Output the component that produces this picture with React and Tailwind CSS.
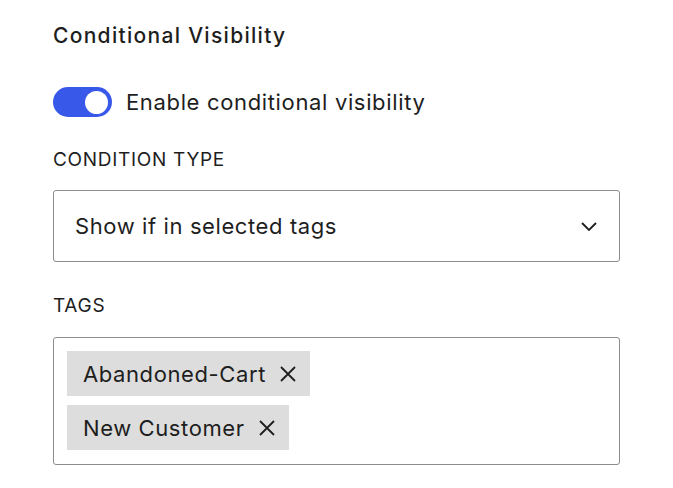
const Chip = ({ label }) => (
  <div className="flex items-center h-[45px] bg-[#dddddd] pl-[16px] pr-[13px] gap-[13px]">
    <span className="text-[22px] tracking-[0.6px] text-[#1e1e1e] leading-[28px]">{label}</span>
    <svg width="18" height="16" viewBox="0 0 18 16" fill="none" stroke="#1e1e1e" strokeWidth="1.8">
      <path d="M2 1 L16 15 M16 1 L2 15" />
    </svg>
  </div>
);

const App = () => {
  return (
    <div
      className="w-[673px] h-[488px] bg-white text-[#1e1e1e] pl-[53px] pr-[53px] pt-[22px]"
      style={{ fontFamily: "Inter, 'Noto Sans', sans-serif" }}
    >
      <h2 className="text-[21px] tracking-[1.3px] font-medium leading-[28px]">Conditional Visibility</h2>

      <div className="flex items-center mt-[37px] gap-[14px]">
        <div className="relative w-[59px] h-[30px] rounded-full bg-[#3858e9]">
          <div className="absolute right-[4px] top-[3.5px] w-[23px] h-[23px] rounded-full bg-white" />
        </div>
        <span className="text-[22px] tracking-[0.65px] leading-[28px]">Enable conditional visibility</span>
      </div>

      <p className="mt-[31px] text-[19px] tracking-[0.7px] uppercase leading-[24px]">Condition Type</p>

      <div className="mt-[18px] w-[567px] h-[72px] border border-[#8c8c8c] rounded-[3px] flex items-center justify-between pl-[21px] pr-[22px]">
        <span className="text-[22px] tracking-[0.6px]">Show if in selected tags</span>
        <svg width="16" height="9" viewBox="0 0 16 9" fill="none" stroke="#1e1e1e" strokeWidth="1.8">
          <path d="M1 1 L8 8 L15 1" />
        </svg>
      </div>

      <p className="mt-[32px] text-[19px] tracking-[0.7px] uppercase leading-[24px]">Tags</p>

      <div className="mt-[19px] w-[567px] h-[128px] border border-[#8c8c8c] rounded-[3px] pl-[13px] pt-[13px] flex flex-col items-start gap-[9px]">
        <Chip label="Abandoned-Cart" />
        <Chip label="New Customer" />
      </div>
    </div>
  );
};

export default App;
